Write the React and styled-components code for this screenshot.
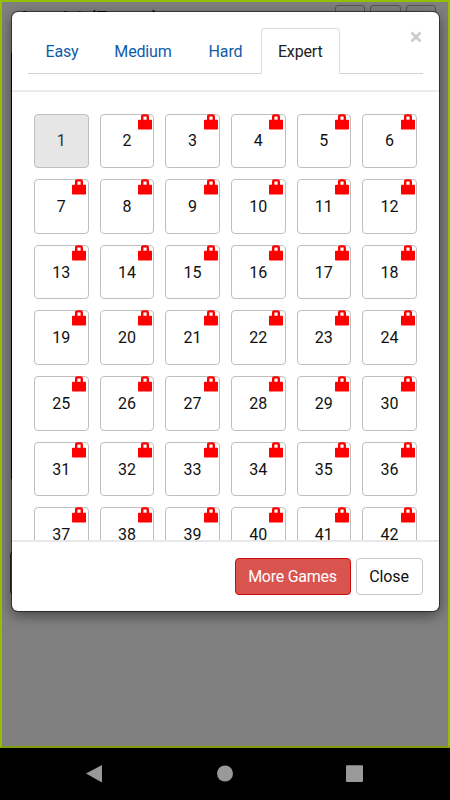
import React from 'react'
import styled, { createGlobalStyle } from 'styled-components'

const GlobalStyle = createGlobalStyle`
    * {
        box-sizing: border-box;
    }
    body {
        margin: 0;
        font-family: Roboto, sans-serif;
        font-size: 16px;
        color: #111;
    }
    button {
        font: inherit;
        color: inherit;
        padding: 0;
        margin: 0;
    }
`
const StyledScreen = styled.div`
    width: 450px;
    height: 800px;
    display: flex;
    flex-direction: column;
    background: #000;
    overflow: hidden;
`
const StyledPage = styled.main`
    position: relative;
    height: 748px;
    padding: 3px 12px;
    background: #808080;
    border: 2px solid #96be00;
    border-bottom-color: #7f9e08;
    overflow: hidden;
`
const StyledTopBar = styled.header`
    display: flex;
    justify-content: space-between;
    height: 34px;
`
const StyledTitle = styled.h1`
    margin: 0 0 0 8px;
    font-size: 19.6px;
    line-height: 30px;
    font-weight: 500;
    color: #000;
`
const StyledTools = styled.div`
    display: flex;
    gap: 5px;
`
const StyledTool = styled.div`
    width: 30.5px;
    height: 30px;
    border: 1px solid #555;
    border-radius: 3px;
`
const StyledBoard = styled.div`
    height: 426px;
    margin: 14px -3px 0;
    border: 1px solid #000;
`
const StyledPageButton = styled.div`
    width: 80px;
    height: 44px;
    margin: 72px 0 0 -4px;
    border: 1px solid #222;
    border-radius: 4px;
`
const StyledModal = styled.section`
    position: absolute;
    top: 10px;
    left: 10px;
    width: 427px;
    height: 599px;
    display: flex;
    flex-direction: column;
    background: #fff;
    border-radius: 6px;
    box-shadow: 0 0 0 1px rgba(0, 0, 0, .5), 0 4px 14px rgba(0, 0, 0, .5);
    overflow: hidden;
`
const StyledHeader = styled.div`
    position: relative;
    height: 80px;
    flex: none;
    padding: 16px 16px 0;
    border-bottom: 2px solid #ececec;
`
const StyledTabs = styled.div`
    display: flex;
    height: 46px;
    border-bottom: 1px solid #d2d2d2;
`
const StyledTab = styled.button`
    height: 46px;
    width: ${props => props.$width}px;
    line-height: 45px;
    letter-spacing: -.15px;
    border: 1px solid ${props => props.$active ? '#dcdcdc' : 'transparent'};
    border-bottom-color: ${props => props.$active ? '#fff' : 'transparent'};
    border-radius: 4px 4px 0 0;
    background: ${props => props.$active ? '#fff' : 'none'};
    color: ${props => props.$active ? '#222' : '#0f5aa9'};
`
const StyledDismiss = styled.button`
    position: absolute;
    top: 19px;
    right: 17px;
    width: 12px;
    height: 12px;
    border: none;
    background: none;
    line-height: 0;
`
const StyledBody = styled.div`
    flex: 1;
    min-height: 0;
    overflow: hidden;
    padding: 21.5px 22px 0;
`
const StyledGrid = styled.div`
    display: grid;
    grid-template-columns: repeat(6, 54.6px);
    grid-auto-rows: 54.6px;
    gap: 11.05px;
`
const StyledLevel = styled.button`
    position: relative;
    border: 1px solid #bfbfbf;
    border-radius: 4px;
    background: ${props => props.$current ? '#e6e6e6' : '#fff'};
    color: ${props => props.$current ? '#333' : '#111'};
`
const StyledLock = styled.svg`
    position: absolute;
    top: -1px;
    right: 1.3px;
    display: block;
`
const StyledFooter = styled.div`
    height: 71px;
    flex: none;
    display: flex;
    justify-content: flex-end;
    gap: 5px;
    padding: 16px 16.5px 0;
    border-top: 2px solid #e8e8e8;
`
const StyledButton = styled.button`
    width: ${props => props.$danger ? 116 : 67}px;
    height: 37px;
    letter-spacing: ${props => props.$danger ? '-.25px' : '-.1px'};
    border: 1px solid ${props => props.$danger ? '#cc0b0b' : '#c6c6c6'};
    border-radius: 4px;
    background: ${props => props.$danger ? '#d9534f' : '#fff'};
    color: ${props => props.$danger ? '#fff' : '#111'};
`
const StyledNavBar = styled.nav`
    flex: 1;
    display: flex;
`
const StyledNavIcon = styled.svg`
    width: 100%;
    height: 52px;
    fill: #999;
`

const tabs = [
    { name: 'Easy', width: 68 },
    { name: 'Medium', width: 94 },
    { name: 'Hard', width: 71 },
    { name: 'Expert', width: 78.5 },
]
const levels = Array.from({ length: 42 }, (_, i) => i + 1)

function Lock() {
    return (
        <StyledLock width="14" height="16" viewBox="0 0 14 16">
            <path d="M4.2 7V2.6Q4.2 1.4 5.4 1.4H8.6Q9.8 1.4 9.8 2.6V7" fill="none" stroke="#f00" strokeWidth="2.4" />
            <rect y="5.7" width="14" height="9.8" rx="0.8" fill="#f00" />
        </StyledLock>
    )
}

function LevelModal() {
    return (
        <StyledModal>
            <StyledHeader>
                <StyledTabs>
                    {tabs.map(tab => (
                        <StyledTab key={tab.name} $width={tab.width} $active={tab.name === 'Expert'}>
                            {tab.name}
                        </StyledTab>
                    ))}
                </StyledTabs>
                <StyledDismiss>
                    <svg width="12" height="12">
                        <path d="M1.5 1.5L10.5 10.5M10.5 1.5L1.5 10.5" stroke="#ccc" strokeWidth="2.7" />
                    </svg>
                </StyledDismiss>
            </StyledHeader>
            <StyledBody>
                <StyledGrid>
                    {levels.map(level => (
                        <StyledLevel key={level} $current={level === 1}>
                            {level}
                            {level > 1 && <Lock />}
                        </StyledLevel>
                    ))}
                </StyledGrid>
            </StyledBody>
            <StyledFooter>
                <StyledButton $danger>More Games</StyledButton>
                <StyledButton>Close</StyledButton>
            </StyledFooter>
        </StyledModal>
    )
}

export default function App() {
    return (
        <StyledScreen>
            <GlobalStyle />
            <StyledPage>
                <StyledTopBar>
                    <StyledTitle>Level 1 (Expert)</StyledTitle>
                    <StyledTools>
                        <StyledTool />
                        <StyledTool />
                        <StyledTool />
                    </StyledTools>
                </StyledTopBar>
                <StyledBoard />
                <StyledPageButton />
                <LevelModal />
            </StyledPage>
            <StyledNavBar>
                <StyledNavIcon viewBox="0 0 450 52">
                    <path d="M86 25.5L102 17V34.5Z" />
                    <circle cx="225" cy="25.5" r="8" />
                    <rect x="346" y="17.3" width="17" height="16.7" rx="1" />
                </StyledNavIcon>
            </StyledNavBar>
        </StyledScreen>
    )
}
